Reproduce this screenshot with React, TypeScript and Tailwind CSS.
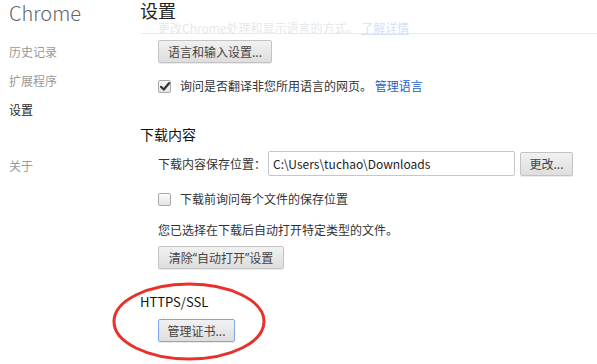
import React from "react";

const font = { fontFamily: "'Noto Sans CJK SC', 'Noto Sans', sans-serif" };
const latin = { fontFamily: "'Noto Sans', sans-serif" };

function Btn({ children, focused = false, className = "" }: { children: React.ReactNode; focused?: boolean; className?: string }) {
  return (
    <button
      className={`flex items-center justify-center whitespace-nowrap rounded-[2px] border text-[12px] leading-none text-[#444] bg-gradient-to-b from-[#f1f1f1] to-[#dedede] shadow-[0_1px_0_rgba(0,0,0,0.08)] ${
        focused ? "border-[#7ea6f0]" : "border-[#c3c3c3]"
      } ${className}`}
    >
      {children}
    </button>
  );
}

function Check({ checked }: { checked?: boolean }) {
  return (
    <div className="w-[13px] h-[13px] rounded-[2px] border border-[#a9a9a9] bg-gradient-to-b from-[#fbfbfb] to-[#e4e4e4] flex items-center justify-center shrink-0">
      {checked && (
        <svg width="10" height="9" viewBox="0 0 10 9">
          <path d="M1 4.8 L3.8 7.5 L9 1.2" fill="none" stroke="#333" strokeWidth="2.2" strokeLinecap="round" strokeLinejoin="round" />
        </svg>
      )}
    </div>
  );
}

export default function App() {
  return (
    <div className="relative w-[597px] h-[364px] overflow-hidden bg-white flex text-[#333]" style={font}>
      {/* sidebar */}
      <div className="w-[140px] shrink-0 pl-[9px]">
        <div className="h-[26px] text-[20px] leading-[26px] text-[#5f646a] font-light">Chrome</div>
        <div className="mt-[18px] text-[12px] leading-[16px] text-[#999]">历史记录</div>
        <div className="mt-[13px] text-[12px] leading-[16px] text-[#999]">扩展程序</div>
        <div className="mt-[13px] text-[12px] leading-[16px] text-[#2a2a2a]">设置</div>
        <div className="mt-[40px] text-[12px] leading-[16px] text-[#999]">关于</div>
      </div>

      {/* main */}
      <div className="flex-1">
        <div className="border-b border-[#ececec] h-[34px]">
          <div className="h-[21px] text-[18px] leading-[21px] text-[#222]">设置</div>
          <div className="pl-[18px] text-[12px] leading-[13px] text-[#e6e8ec] whitespace-nowrap">
            更改Chrome处理和显示语言的方式。 <span className="text-[#d7e1f5] underline">了解详情</span>
          </div>
        </div>

        <div className="pl-[18px]">
          <Btn className="mt-[6px] w-[114px] h-[23px]">语言和输入设置...</Btn>
          <div className="mt-[16px] h-[14px] flex items-center gap-[9px] text-[12px] leading-none whitespace-nowrap">
            <Check checked />
            <span>
              询问是否翻译非您所用语言的网页。 <span className="text-[#1f5fcc]">管理语言</span>
            </span>
          </div>
        </div>

        <div className="mt-[31px] text-[14px] leading-[20px] text-[#111]">下载内容</div>

        <div className="pl-[18px]">
          <div className="mt-[7px] h-[25px] flex items-center text-[12px] whitespace-nowrap">
            <span className="w-[110px]">下载内容保存位置：</span>
            <div className="w-[247px] h-[25px] border border-[#c6c6c6] rounded-[2px] pl-[4px] flex items-center text-[12px] text-[#222]">
              C:\Users\tuchao\Downloads
            </div>
            <Btn className="ml-[5px] w-[53px] h-[24px]">更改...</Btn>
          </div>
          <div className="mt-[16px] h-[14px] flex items-center gap-[9px] text-[12px] leading-none whitespace-nowrap">
            <Check />
            <span>下载前询问每个文件的保存位置</span>
          </div>
          <div className="mt-[16px] text-[12px] leading-[16px]">您已选择在下载后自动打开特定类型的文件。</div>
          <Btn className="mt-[8px] w-[126px] h-[23px]">
            清除<span style={latin}>“</span>自动打开<span style={latin}>”</span>设置
          </Btn>
        </div>

        <div className="mt-[23px] text-[13px] leading-[20px] text-[#111]">HTTPS/SSL</div>
        <div className="pl-[18px]">
          <Btn focused className="mt-[7px] w-[77px] h-[23px]">管理证书...</Btn>
        </div>
      </div>

      {/* red annotation */}
      <svg className="absolute left-[111px] top-[281px]" width="156" height="81" viewBox="0 0 156 81">
        <ellipse cx="78" cy="40.5" rx="75" ry="37.5" fill="none" stroke="#e8302c" strokeWidth="3" />
      </svg>
    </div>
  );
}
